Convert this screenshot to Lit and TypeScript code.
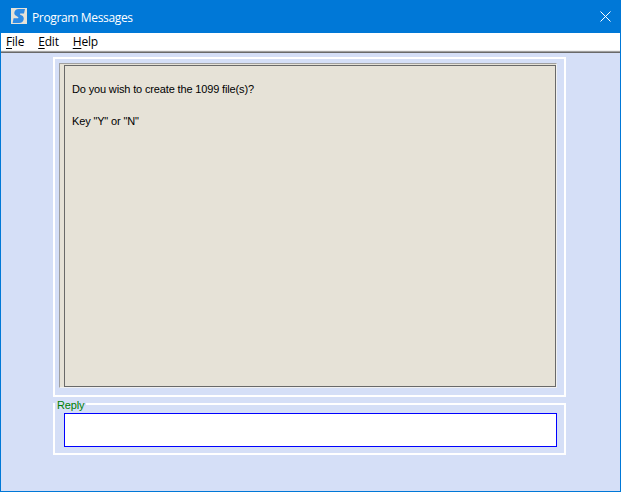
import { LitElement, html, css } from "lit";
import { customElement } from "lit/decorators.js";

@customElement("app-root")
export class AppRoot extends LitElement {
  static styles = css`
    :host { display: block; width: 621px; height: 492px; }
    .win { box-sizing: border-box; width: 621px; height: 492px; border: 1px solid #0078d7; border-top: 0; display: flex; flex-direction: column; background: #d5dff7; }
    .title { box-sizing: border-box; height: 33px; background: #0078d7; display: flex; align-items: center; color: #fff; font: 12px "Open Sans", "Noto Sans", sans-serif; letter-spacing: -0.35px; flex: none; padding: 0 0 1px 10px; }
    .logo { width: 16px; height: 16px; margin-right: 5px; display: block; }
    .title span { flex: 1; padding-top: 2px; }
    .x { width: 11px; height: 11px; margin-right: 9px; display: block; }
    .menu { box-sizing: border-box; height: 17px; background: #fff; flex: none; display: flex; font: 12px "Open Sans", "Noto Sans", sans-serif; letter-spacing: -0.2px; color: #000; align-items: center; padding-left: 5px; gap: 14px; }
    .menu u { text-underline-offset: 2px; }
    .sep { box-sizing: border-box; height: 3px; flex: none; background: #a0a0a0; border-top: 1px solid #f0f0f0; border-bottom: 1px solid #696969; }
    .content { flex: 1; display: flex; flex-direction: column; padding: 4px 0 0 52px; gap: 6px; }
    .panel { box-sizing: border-box; width: 513px; border: 2px solid #fff; }
    .msgs { height: 340px; padding: 4px 0 0 4px; }
    .bevel { box-sizing: border-box; width: 498px; height: 325px; border-style: solid; border-width: 1px; border-color: #a0a0a0 #f0f0f0 #f0f0f0 #a0a0a0; background: #e6e2d7; padding: 1px 0 0 4px; }
    .msg { box-sizing: border-box; width: 492px; height: 322px; background: #e6e2d7; border: 1px solid #696969; font: 11px "Liberation Sans", Arial, sans-serif; letter-spacing: -0.15px; color: #000; padding: 15px 7px; line-height: 16px; }
    .msg p { margin: 0; }
    .msg p + p { margin-top: 16px; }
    .reply { height: 52px; position: relative; padding: 8px 0 0 9px; }
    .legend { position: absolute; left: 0; top: -7px; padding: 0 2px 0 2px; background: #d5dff7; color: #008000; font: 11px "Liberation Sans", Arial, sans-serif; letter-spacing: -0.15px; line-height: 14px; }
    .input { box-sizing: border-box; width: 493px; height: 34px; background: #fff; border: 1px solid #0000ff; }
  `;
  render() {
    return html`<div class="win">
      <div class="title">
        <svg class="logo" viewBox="0 0 16 16"><rect width="16" height="16" fill="#e6e2d7"/><path d="M14 1H7.5C5 1 3.8 2.4 3.4 4.2 3 6 3.9 7 5.2 7.8L7 8.9C7.7 9.3 7.4 10.2 6.6 10.2H2.6L1.6 15H8.2C10.8 15 12.3 13.4 12.7 11.2 13 9.4 12.2 8.3 10.9 7.6L9.3 6.7C8.7 6.3 9 5.6 9.7 5.6H13Z" fill="#2d8be6"/></svg>
        <span>Program Messages</span>
        <svg class="x" viewBox="0 0 11 11"><path d="M.5.5l10 10M10.5.5l-10 10" stroke="#fff" fill="none"/></svg>
      </div>
      <div class="menu"><span><u>F</u>ile</span><span><u>E</u>dit</span><span><u>H</u>elp</span></div>
      <div class="sep"></div>
      <div class="content">
        <div class="panel msgs"><div class="bevel"><div class="msg"><p>Do you wish to create the 1099 file(s)?</p><p>Key "Y" or "N"</p></div></div></div>
        <div class="panel reply"><div class="legend">Reply</div><div class="input"></div></div>
      </div>
    </div>`;
  }
}
